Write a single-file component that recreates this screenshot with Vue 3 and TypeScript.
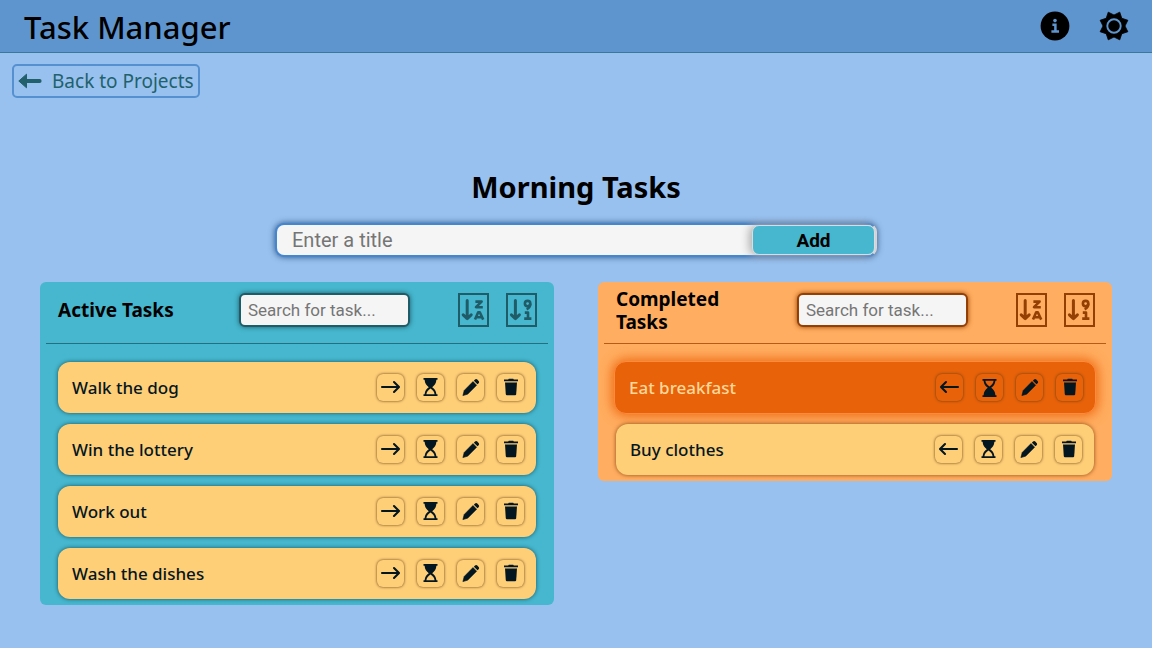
<script setup lang="ts">
import { ref } from 'vue'

interface Task {
  id: number
  title: string
  urgent?: boolean
}

interface Column {
  key: 'active' | 'completed'
  heading: string
  tasks: Task[]
}

const title = ref('')
const searches = ref<Record<string, string>>({ active: '', completed: '' })

const columns = ref<Column[]>([
  {
    key: 'active',
    heading: 'Active Tasks',
    tasks: [
      { id: 1, title: 'Walk the dog' },
      { id: 2, title: 'Win the lottery' },
      { id: 3, title: 'Work out' },
      { id: 4, title: 'Wash the dishes' },
    ],
  },
  {
    key: 'completed',
    heading: 'Completed Tasks',
    tasks: [
      { id: 5, title: 'Eat breakfast', urgent: true },
      { id: 6, title: 'Buy clothes' },
    ],
  },
])

function visibleTasks(column: Column): Task[] {
  const query = searches.value[column.key].toLowerCase()
  return column.tasks.filter((task) => task.title.toLowerCase().includes(query))
}

function addTask() {
  const text = title.value.trim()
  if (!text) return
  columns.value[0].tasks.push({ id: Date.now(), title: text })
  title.value = ''
}

function removeTask(column: Column, task: Task) {
  column.tasks = column.tasks.filter((item) => item.id !== task.id)
}

function moveTask(column: Column, task: Task) {
  const target = columns.value.find((item) => item.key !== column.key)
  removeTask(column, task)
  target?.tasks.push(task)
}

// Eight-pointed star: outer points alternate with inner valleys.
const sunPoints = Array.from({ length: 16 }, (_, i) => {
  const radius = i % 2 === 0 ? 11 : 15
  const angle = (i * Math.PI) / 8
  return `${(15 + radius * Math.cos(angle)).toFixed(2)},${(15 + radius * Math.sin(angle)).toFixed(2)}`
}).join(' ')
</script>

<template>
  <div class="page">
    <header class="topbar">
      <h1>Task Manager</h1>
      <div class="topbar-actions">
        <button type="button" class="plain" aria-label="Information">
          <svg width="30" height="30" viewBox="0 0 30 30">
            <circle cx="15" cy="15" r="14.4" />
            <circle cx="15" cy="9.6" r="1.8" fill="#5f95cf" />
            <path d="M12.4 13.8H15.4V20.6M11.4 20.6H19" fill="none" stroke="#5f95cf" stroke-width="2.5" />
          </svg>
        </button>
        <button type="button" class="plain" aria-label="Toggle theme">
          <svg width="30" height="30" viewBox="0 0 30 30">
            <polygon :points="sunPoints" stroke="#000" stroke-width="0.8" stroke-linejoin="round" />
            <circle cx="15" cy="15" r="6.7" fill="#000" stroke="#5f95cf" stroke-width="1.9" />
          </svg>
        </button>
      </div>
    </header>

    <nav class="crumbs">
      <a href="#" class="back">
        <svg width="24" height="16" viewBox="0 0 24 16">
          <path d="M8.5 1.2V14.8L0.8 8Z" stroke="currentColor" stroke-width="1" stroke-linejoin="round" />
          <path d="M7 8H21.6" stroke="currentColor" stroke-width="4" stroke-linecap="round" />
        </svg>
        <span>Back to Projects</span>
      </a>
    </nav>

    <main>
      <h2>Morning Tasks</h2>

      <form class="add-form" @submit.prevent="addTask">
        <input v-model="title" type="text" placeholder="Enter a title" aria-label="Task title" />
        <button type="submit">Add</button>
      </form>

      <div class="columns">
        <section v-for="column in columns" :key="column.key" class="panel" :class="column.key">
          <div class="panel-head">
            <h3>{{ column.heading }}</h3>
            <input
              v-model="searches[column.key]"
              type="text"
              class="search"
              placeholder="Search for task..."
              :aria-label="`Search ${column.heading}`"
            />
            <div class="sorts">
              <button type="button" class="sort" aria-label="Sort by name">
                <svg width="31" height="34" viewBox="0 0 31 34">
                  <rect x="1" y="1" width="29" height="32" />
                  <path class="arrow" d="M9.2 7.6V25.4M5.2 21.8L9.2 25.6L13.2 21.8" />
                  <path class="mark" d="M17.4 8.6H23.6L18 14.2H24.8" />
                  <path class="mark" d="M17 26.6L20.2 19.2H21.8L25.2 26.6M18.2 24.2H24" />
                </svg>
              </button>
              <button type="button" class="sort" aria-label="Sort by number">
                <svg width="31" height="34" viewBox="0 0 31 34">
                  <rect x="1" y="1" width="29" height="32" />
                  <path class="arrow" d="M9.4 7.6V25.4M5.4 21.8L9.4 25.6L13.4 21.8" />
                  <circle class="mark" cx="21.6" cy="10.6" r="2.7" />
                  <path class="mark" d="M24.3 10.8C24.3 13.8 22.6 15.4 20.6 16.2" />
                  <path class="mark" d="M18.8 19.6H22V25.6M18.2 25.6H25.4" />
                </svg>
              </button>
            </div>
          </div>

          <ul>
            <li v-for="task in visibleTasks(column)" :key="task.id" class="task" :class="{ urgent: task.urgent }">
              <span class="task-title">{{ task.title }}</span>
              <div class="task-actions">
                <button type="button" aria-label="Move task" @click="moveTask(column, task)">
                  <svg viewBox="0 0 27 27" :class="{ mirrored: column.key === 'completed' }">
                    <path
                      d="M5 13H21.8M17 8L22 13L17 18"
                      fill="none"
                      stroke="currentColor"
                      stroke-width="2.1"
                      stroke-linecap="round"
                      stroke-linejoin="round"
                    />
                  </svg>
                </button>
                <button type="button" aria-label="Toggle priority">
                  <svg viewBox="0 0 27 27" :class="{ flipped: task.urgent }">
                    <path d="M6.5 4H20.5V5.8H19.4C19.2 9.6 17.4 11.6 15.2 13.2C17.4 14.8 19.2 16.8 19.4 20.2H20.5V22H6.5V20.2H7.6C7.8 16.8 9.6 14.8 11.8 13.2C9.6 11.6 7.8 9.6 7.6 5.8H6.5Z" />
                    <path class="hollow" d="M9.4 20.2C9.7 17.6 11.2 16.3 13.5 14.5C15.8 16.3 17.3 17.6 17.6 20.2Z" />
                  </svg>
                </button>
                <button type="button" aria-label="Edit task">
                  <svg viewBox="0 0 27 27">
                    <path d="M16 7.6L19.6 11.2L10.6 20.2L5.9 21.6L7.2 16.5Z" stroke="currentColor" stroke-width="0.6" stroke-linejoin="round" />
                    <path d="M16.9 6.7L18 5.6C18.8 4.9 19.6 4.9 20.3 5.6L21.6 6.9C22.3 7.6 22.3 8.5 21.6 9.2L20.5 10.3Z" />
                  </svg>
                </button>
                <button type="button" aria-label="Delete task" @click="removeTask(column, task)">
                  <svg viewBox="0 0 27 27">
                    <path d="M7 5.6H11.2L11.8 4.7H16.2L16.8 5.6H21V7.3H7Z" />
                    <path d="M8 8.4H20L19.2 20.2Q19.1 21.2 18.1 21.2H9.9Q8.9 21.2 8.8 20.2Z" />
                  </svg>
                </button>
              </div>
            </li>
          </ul>
        </section>
      </div>
    </main>
  </div>
</template>

<style>
body {
  margin: 0;
  background: #98c1ef;
}
</style>

<style scoped>
* {
  box-sizing: border-box;
}

.page {
  min-height: 100vh;
  background: #98c1ef;
  color: #000;
  font-family: 'Noto Sans', 'Open Sans', sans-serif;
}

h1,
h2,
h3,
ul {
  margin: 0;
  padding: 0;
}

button {
  padding: 0;
  cursor: pointer;
}

svg {
  display: block;
}

.topbar {
  display: flex;
  align-items: center;
  justify-content: space-between;
  height: 53px;
  padding: 0 23px 0 24px;
  background: #5f95cf;
  border-bottom: 1px solid #39789a;
}

h1 {
  padding-top: 2px;
  font-size: 31px;
  font-weight: 500;
  line-height: 40px;
}

.topbar-actions {
  display: flex;
  gap: 29px;
}

.plain {
  border: 0;
  background: none;
}

.crumbs {
  display: flex;
  padding: 11px 12px 0;
}

.back {
  display: flex;
  align-items: center;
  gap: 10px;
  height: 34px;
  padding: 0 4px;
  border: 2px solid #5590d0;
  border-radius: 5px;
  color: #22616c;
  font-size: 19px;
  font-weight: 400;
  text-decoration: none;
}

.back svg {
  fill: currentColor;
}

main {
  padding: 68px 40px 40px;
}

h2 {
  font-size: 29px;
  font-weight: 700;
  line-height: 42px;
  text-align: center;
}

.add-form {
  display: flex;
  width: 602px;
  max-width: 100%;
  height: 34px;
  margin: 15px auto 25px;
  border: 2px solid #4486d0;
  border-right-color: #dcdce0;
  border-radius: 9px;
  background: #f5f5f5;
  box-shadow: 0 0 6px #2b5180;
}

.add-form input {
  flex: 1;
  min-width: 0;
  padding: 0 15px;
  border: 0;
  border-radius: 8px;
  outline: 0;
  background: transparent;
  font-family: Roboto, sans-serif;
  font-size: 20px;
}

.add-form button {
  width: 123px;
  border: 1px solid #dcdce0;
  border-radius: 7px;
  background: #46b7ce;
  box-shadow: -3px 0 8px #b0b0b0;
  color: #000;
  font-family: Roboto, sans-serif;
  font-size: 19px;
  font-weight: 700;
}

input::placeholder {
  color: #757575;
  opacity: 1;
}

.columns {
  display: grid;
  grid-template-columns: 1fr 1fr;
  align-items: start;
  gap: 44px;
}

.panel {
  --ink: #1f5c68;
  padding: 0 6px 6px;
  border-radius: 6px;
  background: #46b7ce;
}

.completed {
  --ink: #943f04;
  background: #ffad60;
}

.panel-head {
  display: grid;
  grid-template-columns: 125px 1fr auto;
  align-items: center;
  height: 62px;
  padding: 0 11px 6px 12px;
  border-bottom: 1px solid #24707f;
}

.completed .panel-head {
  border-color: #b65a16;
}

h3 {
  padding-top: 2px;
  font-size: 19px;
  font-weight: 700;
  line-height: 23px;
}

.search {
  justify-self: end;
  width: 171px;
  height: 34px;
  margin-right: 48px;
  padding: 0 7px;
  border: 2px solid var(--ink);
  border-radius: 6px;
  outline: 0;
  background: #f5f5f5;
  box-shadow: 0 0 5px var(--ink);
  font-family: Roboto, sans-serif;
  font-size: 17px;
}

.sorts {
  display: flex;
  gap: 17px;
}

.sort {
  border: 0;
  background: none;
  color: var(--ink);
}

.sort svg {
  fill: none;
  stroke: currentColor;
  stroke-width: 2;
}

.sort .arrow {
  stroke-width: 3;
  stroke-linecap: round;
  stroke-linejoin: round;
}

.sort .mark {
  stroke-width: 2.6;
  stroke-linejoin: round;
}

ul {
  display: grid;
  gap: 11px;
  padding: 18px 12px 0;
  list-style: none;
}

.task {
  --fill: #ffcf78;
  display: flex;
  align-items: center;
  justify-content: space-between;
  height: 51px;
  padding: 0 12px 0 14px;
  border-radius: 12px;
  background: var(--fill);
  box-shadow: 0 0 4px #155867;
  color: #041620;
}

.completed .task {
  box-shadow: 0 0 4px #8c4a14;
}

.completed .task.urgent {
  --fill: #e8620a;
  height: 53px;
  margin: -1px -2px;
  border: 1px solid #ff8a3c;
  box-shadow: 0 0 12px 2px #ee6a12;
}

.task-title {
  font-size: 17px;
  font-weight: 500;
}

.urgent .task-title {
  color: #ffd899;
}

.task-actions {
  display: flex;
  gap: 13px;
}

.task-actions button {
  width: 27px;
  height: 27px;
  border: 0;
  border-radius: 6px;
  background: var(--fill);
  box-shadow: 0 0 3px #5c3c10;
  color: #041620;
}

.task-actions svg {
  width: 27px;
  height: 27px;
  fill: currentColor;
}

.task-actions .hollow {
  fill: var(--fill);
}

.mirrored {
  transform: scaleX(-1);
}

.flipped {
  transform: scaleY(-1);
}
</style>
